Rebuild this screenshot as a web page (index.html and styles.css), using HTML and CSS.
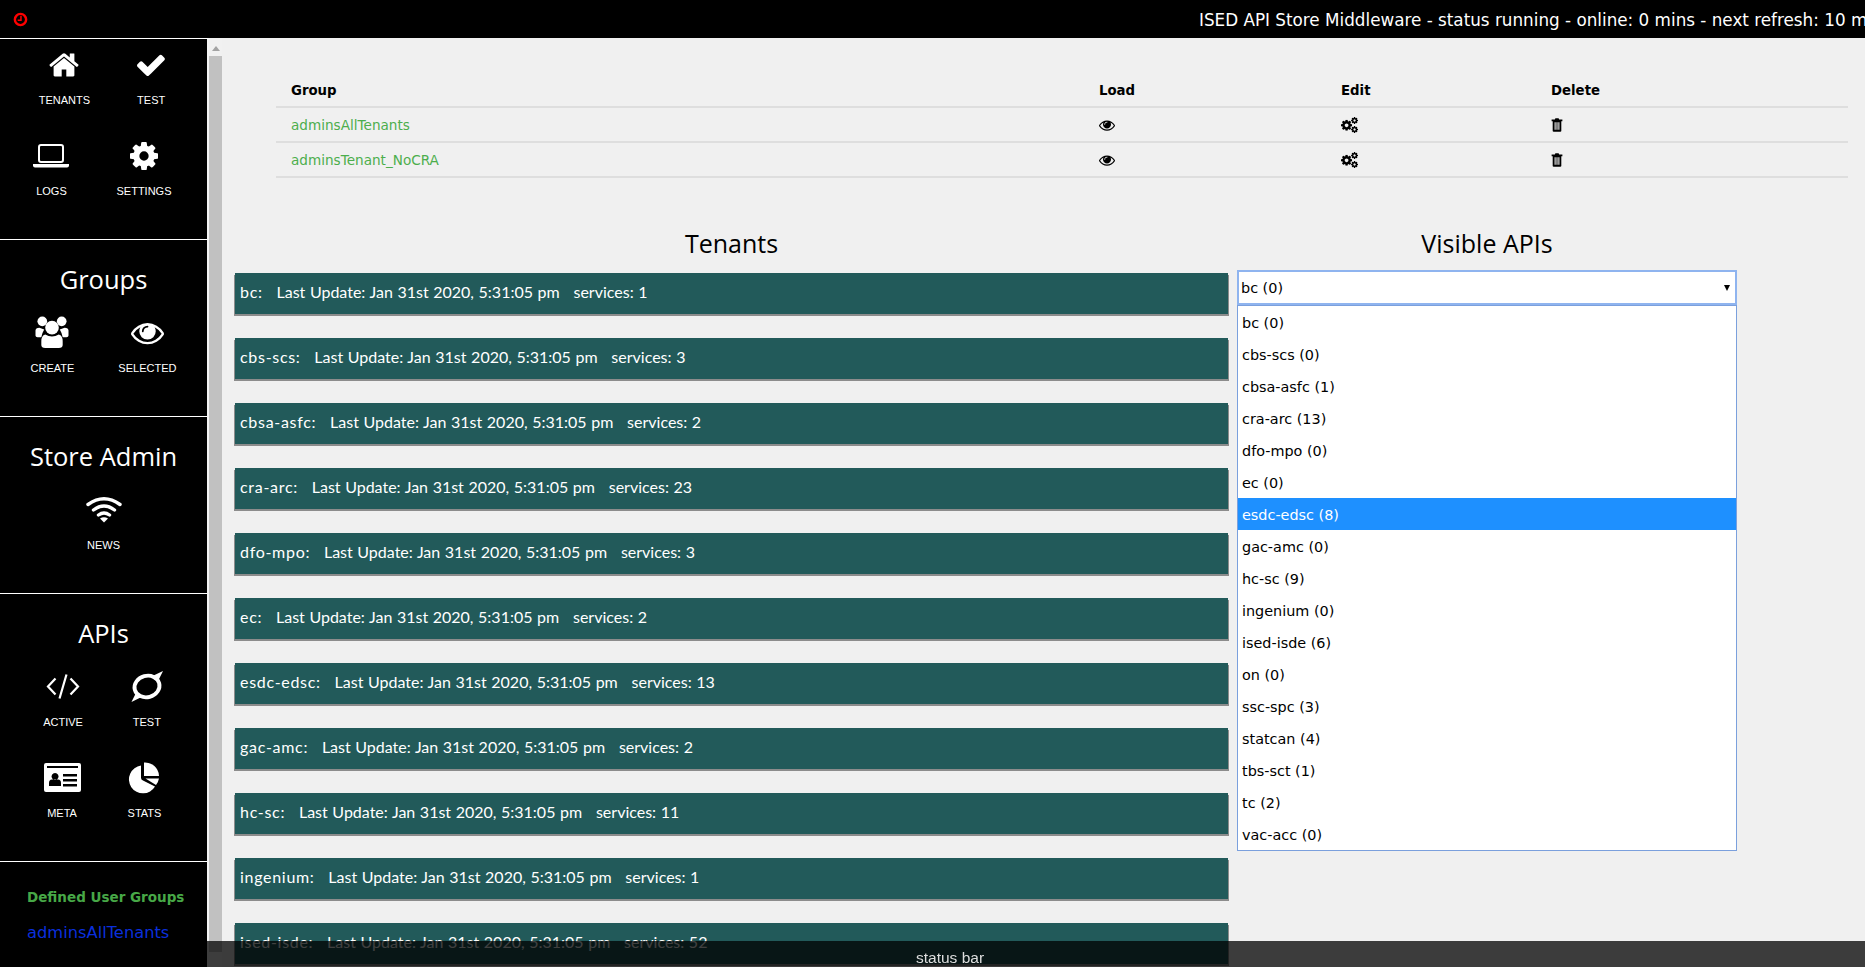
FILE: index.html
```html
<!DOCTYPE html>
<html lang="en">
<head>
  <meta charset="UTF-8">
  <meta name="viewport" content="width=device-width, initial-scale=1.0">
  <title>ISED API Store Middleware</title>
  <link rel="stylesheet" href="styles.css">
</head>
<body>

  <svg class="defs" width="0" height="0">
    <symbol id="i-cog" viewBox="128 128 1536 1536"><path d="M1152 896q0-106-75-181t-181-75-181 75-75 181 75 181 181 75 181-75 75-181zm512-109v222q0 12-8 23t-20 13l-185 28q-19 54-39 91 35 50 107 138 10 12 10 25t-9 23q-27 37-99 108t-94 71q-12 0-26-9l-138-108q-44 23-91 38-16 136-29 186-7 28-36 28h-222q-14 0-24.500-8.500t-11.500-21.500l-28-184q-49-16-90-37l-141 107q-10 9-25 9-14 0-25-11-126-114-165-168-7-10-7-23 0-12 8-23 15-21 51-66.500t54-70.500q-27-50-41-99l-183-27q-13-2-21-12.500t-8-23.500v-222q0-12 8-23t19-13l186-28q14-46 39-92-40-57-107-138-10-12-10-24 0-10 9-23 26-36 98.500-107.500t94.500-71.500q13 0 26 10l138 107q44-23 91-38 16-136 29-186 7-28 36-28h222q14 0 24.500 8.500t11.500 21.500l28 184q49 16 90 37l142-107q9-9 24-9 13 0 25 10 129 119 165 170 7 8 7 22 0 12-8 23-15 21-51 66.500t-54 70.500q26 50 41 98l183 28q13 2 21 12.500t8 23.500z"/></symbol>
    <symbol id="i-eye" viewBox="0 256 1792 1280"><path d="M1664 960q-152-236-381-353 61 104 61 225 0 185-131.500 316.500t-316.500 131.500-316.500-131.500-131.500-316.500q0-121 61-225-229 117-381 353 133 205 333.500 326.500t434.500 121.500 434.500-121.500 333.500-326.500zm-720-384q0-20-14-34t-34-14q-125 0-214.500 89.500t-89.500 214.500q0 20 14 34t34 14 34-14 14-34q0-86 61-147t147-61q20 0 34-14t14-34zm848 384q0 34-20 69-140 230-376.500 368.500t-499.500 138.500-499.500-139-376.500-368q-20-35-20-69t20-69q140-229 376.500-368t499.500-139 499.500 139 376.500 368q20 35 20 69z"/></symbol>
    <symbol id="i-cogs" viewBox="0 0 32 30">
      <use href="#i-cog" x="0" y="5" width="21" height="21"/>
      <use href="#i-cog" x="19" y="0" width="13" height="13"/>
      <use href="#i-cog" x="19" y="17" width="13" height="13"/>
    </symbol>
    <symbol id="i-trash" viewBox="0 0 22 26"><path d="M7 3 8 0.500H14L15 3H21V6H19V24Q19 25.500 17 25.500H5Q3 25.500 3 24V6H1V3ZM6.500 8V22H8.500V8ZM10 8V22H12V8ZM13.500 8V22H15.500V8Z" fill-rule="evenodd"/></symbol>
  </svg>

  <header class="topbar">
    <svg class="clock" viewBox="0 0 16 16" width="15" height="15"><circle cx="8" cy="8" r="6" fill="none" stroke="#f00" stroke-width="2.600"/><path d="M8.500 4V8.800H5" fill="none" stroke="#f00" stroke-width="1.600"/></svg>
    <div class="topbar-status">ISED API Store Middleware - status running - online: 0 mins - next refresh: 10 mins</div>
  </header>

  <div class="page">
    <nav class="sidebar">
      <section class="nav-section nav-main">
        <div class="nav-row row-first">
          <a class="nav-item">
            <svg width="30" height="30" viewBox="64 200 1664 1400"><path d="M1472 992v480q0 26-19 45t-45 19h-384v-384h-256v384h-384q-26 0-45-19t-19-45v-480q0-1 .5-3t.5-3l575-474 575 474q1 2 1 6zm223-69l-62 74q-8 9-21 11h-3q-13 0-21-7l-692-577-692 577q-12 8-24 7-13-2-21-11l-62-74q-8-10-7-23.500t11-21.500l719-599q32-26 76-26t76 26l244 204v-195q0-14 9-23t23-9h192q14 0 23 9t9 23v408l219 182q10 8 11 21.500t-7 23.500z"/></svg>
            <span>TENANTS</span>
          </a>
          <a class="nav-item">
            <svg width="28" height="28" viewBox="120 280 1560 1250"><path d="M1671 566q0 40-28 68l-724 724-136 136q-28 28-68 28t-68-28l-136-136-362-362q-28-28-28-68t28-68l136-136q28-28 68-28t68 28l294 295 656-657q28-28 68-28t68 28l136 136q28 28 28 68z"/></svg>
            <span>TEST</span>
          </a>
        </div>
        <div class="nav-row">
          <a class="nav-item">
            <svg width="36" height="24" viewBox="0 0 36 24"><rect x="6" y="1" width="24" height="17" rx="2" fill="none" stroke="#fff" stroke-width="2"/><path d="M0 20H36V21.500Q36 23.500 34 23.500H2Q0 23.500 0 21.500Z"/></svg>
            <span>LOGS</span>
          </a>
          <a class="nav-item">
            <svg width="28" height="28"><use href="#i-cog"/></svg>
            <span>SETTINGS</span>
          </a>
        </div>
      </section>

      <section class="nav-section nav-titled">
        <h2 class="nav-title">Groups</h2>
        <div class="nav-row row-narrow">
          <a class="nav-item">
            <svg width="36" height="34" viewBox="0 0 36 34"><circle cx="8" cy="5.500" r="5"/><circle cx="28" cy="5.500" r="5"/><path d="M5 12Q1 12 1 15V20Q1 22 5 22H7Q8 17 10 14ZM31 12Q35 12 35 15V20Q35 22 31 22H29Q28 17 26 14Z"/><circle cx="18" cy="12" r="7"/><path d="M11 19Q7 20 7 26V30Q7 33 11 33H25Q29 33 29 30V26Q29 20 25 19Q18 23 11 19Z"/></svg>
            <span>CREATE</span>
          </a>
          <a class="nav-item">
            <svg width="33" height="24"><use href="#i-eye"/></svg>
            <span>SELECTED</span>
          </a>
        </div>
      </section>

      <section class="nav-section nav-titled">
        <h2 class="nav-title">Store Admin</h2>
        <div class="nav-row row-centered">
          <a class="nav-item">
            <svg width="36" height="27" viewBox="0 0 36 27"><path d="M2 8.500Q18 -3 34 8.500M7.500 14Q18 6 28.500 14M12.500 19Q18 15 23.500 19" fill="none" stroke="#fff" stroke-width="3.400" stroke-linecap="round"/><path d="M18 26.500 14 22.500Q18 20 22 22.500Z"/></svg>
            <span>NEWS</span>
          </a>
        </div>
      </section>

      <section class="nav-section nav-titled nav-apis">
        <h2 class="nav-title">APIs</h2>
        <div class="nav-row row-centered">
          <a class="nav-item">
            <svg width="34" height="26" viewBox="0 0 34 26"><path d="M9.500 5 2 13 9.500 21M24.500 5 32 13 24.500 21M20.500 1 13.500 25" fill="none" stroke="#fff" stroke-width="2.200"/></svg>
            <span>ACTIVE</span>
          </a>
          <a class="nav-item">
            <svg width="34" height="34" viewBox="0 0 34 34"><ellipse cx="17" cy="17" rx="13" ry="11" fill="none" stroke="#fff" stroke-width="4" transform="rotate(-15 17 17)"/><path d="M21 7 33.500 1 28 12ZM13 27 1 33 6 23Z"/></svg>
            <span>TEST</span>
          </a>
        </div>
        <div class="nav-row">
          <a class="nav-item">
            <svg width="37" height="29" viewBox="0 0 37 29"><path fill-rule="evenodd" d="M2 0H35Q37 0 37 2V27Q37 29 35 29H2Q0 29 0 27V2Q0 0 2 0ZM3 3V5H34V3ZM11 10A3.500 3.500 0 1 0 11.100 10ZM5 23H17V20Q17 16.500 14 16.500H8Q5 16.500 5 20ZM19 11V13.500H33V11ZM19 16V18.500H33V16ZM19 21V23.500H33V21Z"/></svg>
            <span>META</span>
          </a>
          <a class="nav-item">
            <svg width="32" height="32" viewBox="0 0 32 32"><path d="M13 4A14 14 0 1 0 27 25L15 19A3 3 0 0 1 13 16Z"/><path d="M16 1A14 14 0 0 1 31 14.500H16Z"/><path d="M17.500 17H31A14 14 0 0 1 28 23.500Z"/></svg>
            <span>STATS</span>
          </a>
        </div>
      </section>

      <section class="nav-groups">
        <h3>Defined User Groups</h3>
        <a>adminsAllTenants</a>
        <a>adminsTenant_NoCRA</a>
      </section>
    </nav>

    <div class="scrollbar">
      <div class="scroll-arrow"></div>
      <div class="scroll-thumb"></div>
    </div>

    <main class="content">
      <table class="group-table">
        <thead>
          <tr>
            <th class="col-group">Group</th>
            <th class="col-load">Load</th>
            <th class="col-edit">Edit</th>
            <th>Delete</th>
          </tr>
        </thead>
        <tbody>
          <tr>
            <td><a>adminsAllTenants</a></td>
            <td><svg class="eye-icon"><use href="#i-eye"/></svg></td>
            <td><svg class="cogs-icon"><use href="#i-cogs"/></svg></td>
            <td><svg class="trash-icon"><use href="#i-trash"/></svg></td>
          </tr>
          <tr>
            <td><a>adminsTenant_NoCRA</a></td>
            <td><svg class="eye-icon"><use href="#i-eye"/></svg></td>
            <td><svg class="cogs-icon"><use href="#i-cogs"/></svg></td>
            <td><svg class="trash-icon"><use href="#i-trash"/></svg></td>
          </tr>
        </tbody>
      </table>

      <div class="columns">
        <div class="tenants">
          <h2 class="col-title">Tenants</h2>
          <div class="tenant"><span class="tenant-name">bc:</span>&nbsp;&nbsp; Last Update: Jan 31st 2020, 5:31:05 pm &nbsp; services: 1</div>
          <div class="tenant"><span class="tenant-name">cbs-scs:</span>&nbsp;&nbsp; Last Update: Jan 31st 2020, 5:31:05 pm &nbsp; services: 3</div>
          <div class="tenant"><span class="tenant-name">cbsa-asfc:</span>&nbsp;&nbsp; Last Update: Jan 31st 2020, 5:31:05 pm &nbsp; services: 2</div>
          <div class="tenant"><span class="tenant-name">cra-arc:</span>&nbsp;&nbsp; Last Update: Jan 31st 2020, 5:31:05 pm &nbsp; services: 23</div>
          <div class="tenant"><span class="tenant-name">dfo-mpo:</span>&nbsp;&nbsp; Last Update: Jan 31st 2020, 5:31:05 pm &nbsp; services: 3</div>
          <div class="tenant"><span class="tenant-name">ec:</span>&nbsp;&nbsp; Last Update: Jan 31st 2020, 5:31:05 pm &nbsp; services: 2</div>
          <div class="tenant"><span class="tenant-name">esdc-edsc:</span>&nbsp;&nbsp; Last Update: Jan 31st 2020, 5:31:05 pm &nbsp; services: 13</div>
          <div class="tenant"><span class="tenant-name">gac-amc:</span>&nbsp;&nbsp; Last Update: Jan 31st 2020, 5:31:05 pm &nbsp; services: 2</div>
          <div class="tenant"><span class="tenant-name">hc-sc:</span>&nbsp;&nbsp; Last Update: Jan 31st 2020, 5:31:05 pm &nbsp; services: 11</div>
          <div class="tenant"><span class="tenant-name">ingenium:</span>&nbsp;&nbsp; Last Update: Jan 31st 2020, 5:31:05 pm &nbsp; services: 1</div>
          <div class="tenant"><span class="tenant-name">ised-isde:</span>&nbsp;&nbsp; Last Update: Jan 31st 2020, 5:31:05 pm &nbsp; services: 52</div>
        </div>

        <div class="apis">
          <h2 class="col-title">Visible APIs</h2>
          <div class="select">
            <div class="select-box">bc (0)<span class="select-arrow"></span></div>
            <ul class="select-list">
              <li>bc (0)</li>
              <li>cbs-scs (0)</li>
              <li>cbsa-asfc (1)</li>
              <li>cra-arc (13)</li>
              <li>dfo-mpo (0)</li>
              <li>ec (0)</li>
              <li class="active">esdc-edsc (8)</li>
              <li>gac-amc (0)</li>
              <li>hc-sc (9)</li>
              <li>ingenium (0)</li>
              <li>ised-isde (6)</li>
              <li>on (0)</li>
              <li>ssc-spc (3)</li>
              <li>statcan (4)</li>
              <li>tbs-sct (1)</li>
              <li>tc (2)</li>
              <li>vac-acc (0)</li>
            </ul>
          </div>
        </div>
      </div>
    </main>
  </div>

  <footer class="statusbar">status bar</footer>

</body>
</html>
```

FILE: styles.css
```css
* {
  box-sizing: border-box;
}

html, body {
  height: 100%;
  margin: 0;
  overflow: hidden;
}

body {
  background-color: #f0f0f0;
  color: #000;
  font-family: "DejaVu Sans", sans-serif;
}

.defs {
  position: absolute;
}

/* top bar */
.topbar {
  display: flex;
  align-items: center;
  height: 38px;
  background-color: #000;
  color: #fff;
  padding-left: 13px;
  overflow: hidden;
  font-size: 16.800px;
}

.clock {
  flex: none;
}

.topbar-status {
  margin-left: 1171px;
  padding-top: 1px;
  white-space: nowrap;
}

.page {
  display: flex;
  height: calc(100% - 38px);
}

/* sidebar */
.sidebar {
  flex: none;
  width: 209px;
  background-color: #000;
  color: #fff;
  border-top: 1px solid #fff;
  border-right: 2px solid #f4f4f4;
  overflow: hidden;
}

.nav-section {
  border-bottom: 1px solid #fff;
}

.nav-main {
  height: 201px;
  padding-top: 9px;
}

.nav-titled {
  height: 177px;
  padding-top: 22px;
}

.nav-titled .nav-item span {
  margin-top: 12px;
}

.nav-apis {
  height: 268px;
}

.nav-title {
  height: 34px;
  margin: 0 0 20px;
  font-family: "Open Sans", sans-serif;
  font-size: 25.500px;
  font-weight: 400;
  line-height: 34px;
  text-align: center;
}

.nav-row {
  display: flex;
  justify-content: center;
  gap: 47px;
  margin-bottom: 32px;
  padding-right: 2px;
}

.row-first {
  padding-right: 3px;
}

.row-narrow {
  gap: 44px;
  padding-right: 0;
}

.row-centered {
  padding-right: 0;
}

.nav-item {
  display: flex;
  flex-direction: column;
  align-items: center;
  height: 59px;
}

.nav-item svg {
  display: block;
  height: 34px;
  fill: #fff;
}

.nav-item span {
  margin-top: 11px;
  font-family: "Liberation Sans", sans-serif;
  font-size: 11px;
  line-height: 14px;
}

.nav-groups {
  padding: 26px 0 0 27px;
}

.nav-groups h3 {
  margin: 0 0 9px;
  color: #47a847;
  font-size: 13.500px;
  font-weight: 700;
  line-height: 18px;
  white-space: nowrap;
}

.nav-groups a {
  display: block;
  color: #0a2fdc;
  font-size: 16.300px;
  line-height: 36px;
  white-space: nowrap;
}

.nav-groups a + a {
  margin-top: 6px;
}

/* scrollbar */
.scrollbar {
  flex: none;
  width: 13px;
  background-color: #f1f1f1;
}

.scroll-arrow {
  width: 0;
  height: 0;
  margin: 8px auto 5px;
  border-left: 4px solid transparent;
  border-right: 4px solid transparent;
  border-bottom: 5px solid #a3a3a3;
}

.scroll-thumb {
  height: 896px;
  background-color: #c1c1c1;
}

/* main */
.content {
  flex: 1;
  min-width: 0;
  padding-top: 33px;
  overflow: hidden;
}

.group-table {
  width: 1572px;
  margin-left: 54px;
  border-collapse: collapse;
  font-size: 13.600px;
}

.group-table th {
  height: 36px;
  padding: 3px 0 0 15px;
  border-bottom: 2px solid #dedede;
  font-size: 13.300px;
  text-align: left;
  font-weight: 700;
}

.group-table td {
  height: 35px;
  padding: 0 0 0 15px;
  border-bottom: 2px solid #dedede;
}

.group-table a {
  color: #4cae4c;
}

.col-group {
  width: 808px;
}

.col-load {
  width: 242px;
}

.col-edit {
  width: 210px;
}

.group-table svg {
  display: block;
}

.eye-icon {
  width: 16px;
  height: 12px;
}

.cogs-icon {
  width: 17px;
  height: 16px;
}

.trash-icon {
  width: 12px;
  height: 14px;
}

.columns {
  display: flex;
  gap: 8px;
  padding: 49px 0 0 13px;
}

.col-title {
  height: 40px;
  margin: 0;
  font-family: "Open Sans", sans-serif;
  font-size: 25px;
  font-weight: 400;
  line-height: 32px;
  text-align: center;
}

.tenants {
  width: 993px;
  margin-right: 1px;
}

.tenant {
  height: 41px;
  margin: 6px 0 24px;
  padding-left: 5px;
  background-color: #225a5a;
  box-shadow: 1px 2px 0 #8c8c8c, -1px 2px 0 #8c8c8c;
  color: #fff;
  font-family: "Lato", sans-serif;
  font-size: 16px;
  word-spacing: 0.500px;
  line-height: 38px;
  white-space: nowrap;
}

.tenant-name {
  letter-spacing: 0.700px;
}

.apis {
  width: 500px;
}

.select {
  position: relative;
  margin-top: 3px;
  font-size: 14.400px;
}

.select-box {
  position: relative;
  height: 35px;
  padding-left: 2px;
  background-color: #fff;
  border: 2px solid #8fb4ef;
  line-height: 33px;
}

.select-arrow {
  position: absolute;
  top: 13px;
  right: 5px;
  border-left: 3px solid transparent;
  border-right: 3px solid transparent;
  border-top: 6px solid #000;
}

.select-list {
  position: absolute;
  top: 35px;
  left: 0;
  right: 0;
  margin: 0;
  padding: 0;
  list-style: none;
  background-color: #fff;
  border: 1px solid #7ba0dd;
}

.select-list li {
  height: 32px;
  padding-left: 4px;
  line-height: 35px;
}

.select-list .active {
  background-color: #1e90ff;
  color: #fff;
}

/* status bar */
.statusbar {
  position: fixed;
  left: 207px;
  right: 0;
  bottom: 0;
  height: 26px;
  padding: 8px 0 0 709px;
  background-color: rgba(0, 0, 0, 0.75);
  color: #ddd;
  font-family: "Liberation Sans", sans-serif;
  font-size: 15.500px;
  line-height: 18px;
}
```
